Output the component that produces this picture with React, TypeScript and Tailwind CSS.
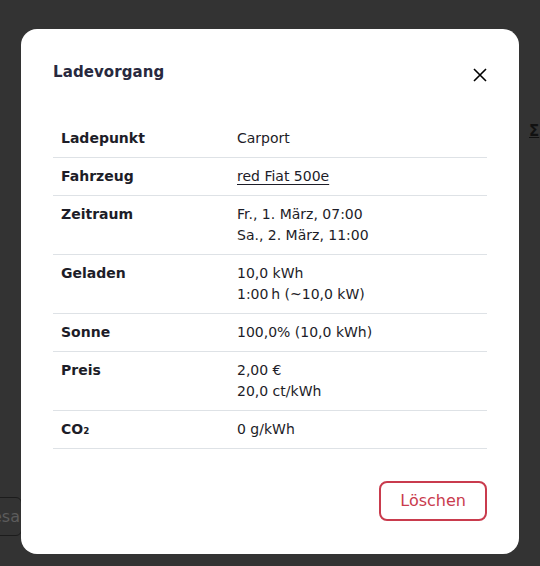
import React from 'react';

type Row = { label: React.ReactNode; lines: React.ReactNode[] };

const rows: Row[] = [
  { label: 'Ladepunkt', lines: ['Carport'] },
  {
    label: 'Fahrzeug',
    lines: [
      <a key="v" href="#" className="underline underline-offset-[3px] decoration-1">
        red Fiat 500e
      </a>,
    ],
  },
  { label: 'Zeitraum', lines: ['Fr., 1. März, 07:00', 'Sa., 2. März, 11:00'] },
  { label: 'Geladen', lines: ['10,0 kWh', '1:00\u2009h (~10,0 kW)'] },
  { label: 'Sonne', lines: ['100,0% (10,0 kWh)'] },
  { label: 'Preis', lines: ['2,00 €', '20,0 ct/kWh'] },
  { label: 'CO₂', lines: ['0 g/kWh'] },
];

export default function App() {
  return (
    <div
      className="relative w-[540px] h-[566px] overflow-hidden bg-[#333333]"
      style={{ fontFamily: '"DejaVu Sans", "Liberation Sans", sans-serif' }}
    >
      {/* page behind the overlay */}
      <div className="absolute left-[-60px] top-[497px] h-[39px] w-[82px] border border-[#1c1c1c] rounded-md flex items-center justify-end pr-[1px] text-[16px] text-[#5c5c5c]">
        Gesa
      </div>
      <div className="absolute left-[529px] top-[122px] text-[15px] leading-[18px] font-bold text-[#111] underline">Σ</div>

      {/* modal */}
      <div className="relative pt-[29px] px-[21px]">
        <div className="bg-white rounded-[16px] px-[32px] pt-[32px] pb-[33px] text-[#28293e]">
          <div className="flex items-start justify-between h-[24px]">
            <h5 className="text-[15px] leading-[22px] font-bold text-[#28293e] tracking-[0.1px]">Ladevorgang</h5>
            <button className="mt-[7px] w-[14px] h-[14px] text-black" aria-label="Schließen">
              <svg viewBox="0 0 14 14" width="14" height="14" fill="none" stroke="currentColor" strokeWidth="1.6">
                <path d="M1 1 L13 13 M13 1 L1 13" />
              </svg>
            </button>
          </div>

          <table className="mt-[35px] w-full border-collapse text-[14px] leading-[21px] text-[#1d1d28]">
            <tbody>
              {rows.map((r, i) => (
                <tr key={i} className="border-b border-[#dee2e6]">
                  <th className="w-[176px] px-2 py-2 text-left align-top font-bold">{r.label}</th>
                  <td className="px-2 py-2 align-top">
                    {r.lines.map((l, j) => (
                      <div key={j}>{l}</div>
                    ))}
                  </td>
                </tr>
              ))}
            </tbody>
          </table>

          <div className="mt-[32px] flex justify-end">
            <button className="h-[40px] px-[19px] rounded-[8px] border-2 border-[#c93b4d] text-[#c93b4d] text-[16px]">
              Löschen
            </button>
          </div>
        </div>
      </div>
    </div>
  );
}
